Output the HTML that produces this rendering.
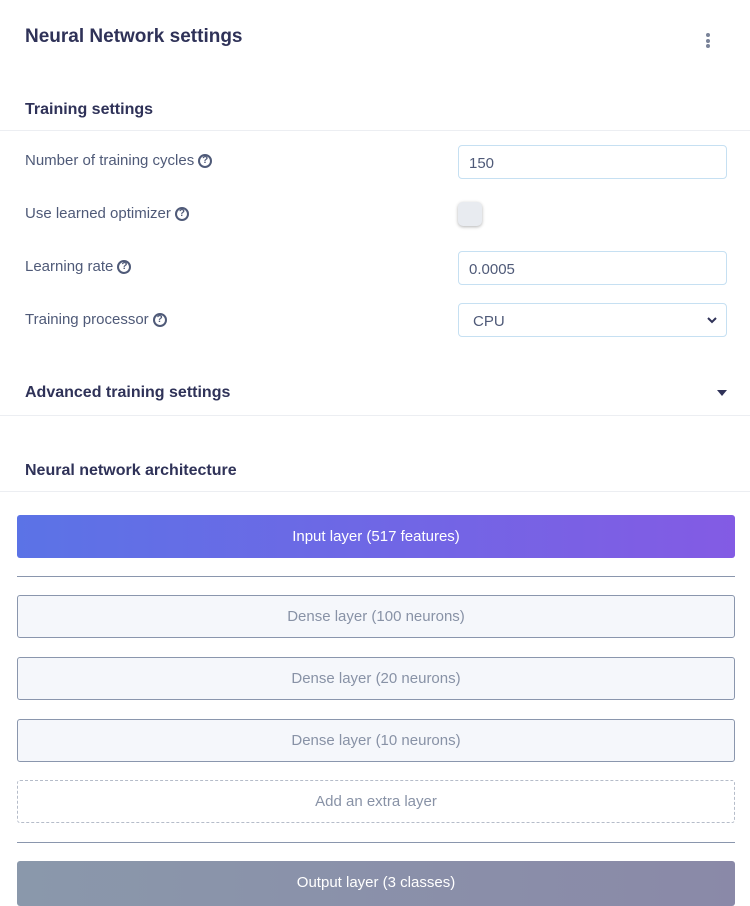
<!DOCTYPE html>
<html><head><meta charset="utf-8"><style>
*{box-sizing:border-box;margin:0;padding:0}
body{width:750px;height:903px;overflow:hidden;background:#fff;font-family:"Liberation Sans",sans-serif;position:relative;color:#4f5a78}
.a{position:absolute}
.t{left:25px;top:26px;font-size:19px;font-weight:bold;color:#2f3258}
.h{left:25px;font-size:16px;font-weight:bold;color:#2f3258}
.hr{left:0;width:750px;height:1px;background:#eceef2}
.l{left:25px;font-size:15px;color:#4f5a78;display:flex;align-items:center}
.q{display:inline-block;width:14px;height:14px;border:2px solid #4f5a78;border-radius:50%;font-size:10px;font-weight:bold;text-align:center;line-height:10px;margin-left:4px}
.in{left:458px;width:269px;height:34px;border:1px solid #c6e0f2;border-radius:4px;font-size:15px;padding:9px 0 0 10px;color:#4f5a78}
.box{left:17px;width:718px;height:43px;border-radius:3px;text-align:center;font-size:15px;line-height:43px}
.d{border:1px solid #8a96ad;background:#f5f7fb;color:#8892a6;line-height:41px}
.ln{left:17px;width:718px;height:1px;background:#8a96ad}
</style></head><body>
<div class="a t">Neural Network settings</div>
<div class="a" style="left:706px;top:33px;width:4px">
<div style="width:4px;height:4px;border-radius:2px;background:#7a8399;margin-bottom:1.5px"></div>
<div style="width:4px;height:4px;border-radius:2px;background:#7a8399;margin-bottom:1.5px"></div>
<div style="width:4px;height:4px;border-radius:2px;background:#7a8399"></div></div>
<div class="a h" style="top:101px">Training settings</div>
<div class="a hr" style="top:130px"></div>
<div class="a l" style="top:152px">Number of training cycles<span class="q">?</span></div>
<div class="a l" style="top:205px">Use learned optimizer<span class="q">?</span></div>
<div class="a l" style="top:258px">Learning rate<span class="q">?</span></div>
<div class="a l" style="top:311px">Training processor<span class="q">?</span></div>
<div class="a in" style="top:145px">150</div>
<div class="a" style="left:458px;top:202px;width:24px;height:24px;border-radius:5px;background:#e8ebf0;box-shadow:0 1px 3px rgba(0,0,0,.3)"></div>
<div class="a in" style="top:251px">0.0005</div>
<div class="a in" style="top:303px;padding-left:14px">CPU
<svg class="a" style="right:9px;top:13px" width="10" height="7" viewBox="0 0 10 7"><path d="M1 1l4 4 4-4" stroke="#2f3258" stroke-width="2" fill="none"/></svg></div>
<div class="a h" style="top:384px">Advanced training settings</div>
<svg class="a" style="left:717px;top:390px" width="10" height="6"><path d="M0 0h10L5 6z" fill="#2f3258"/></svg>
<div class="a hr" style="top:415px"></div>
<div class="a h" style="top:462px">Neural network architecture</div>
<div class="a hr" style="top:491px"></div>
<div class="a box" style="top:515px;height:43px;background:linear-gradient(90deg,#5b73e6,#835be4);color:#fff">Input layer (517 features)</div>
<div class="a ln" style="top:576px"></div>
<div class="a box d" style="top:595px">Dense layer (100 neurons)</div>
<div class="a box d" style="top:657px">Dense layer (20 neurons)</div>
<div class="a box d" style="top:719px">Dense layer (10 neurons)</div>
<div class="a box" style="top:780px;border:1px dashed #b5bcc9;color:#8892a6;line-height:41px">Add an extra layer</div>
<div class="a ln" style="top:842px"></div>
<div class="a box" style="top:861px;height:45px;background:linear-gradient(90deg,#8a98ab,#8a89a8);color:#fff">Output layer (3 classes)</div>
</body></html>
